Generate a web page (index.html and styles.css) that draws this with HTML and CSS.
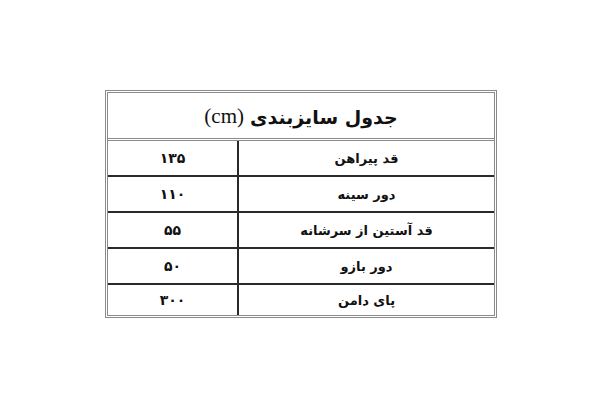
FILE: index.html
```html
<!DOCTYPE html>
<html lang="fa" dir="rtl">
<head>
<meta charset="utf-8">
<title>جدول سایزبندی</title>
<link rel="stylesheet" href="styles.css">
</head>
<body>
<div class="page">
  <div class="frame">
    <div class="title">جدول سایزبندی <span class="unit">(cm)</span></div>
    <div class="grid">
      <div class="label">قد پیراهن</div><div class="value">۱۳۵</div>
      <div class="label">دور سینه</div><div class="value">۱۱۰</div>
      <div class="label">قد آستین از سرشانه</div><div class="value">۵۵</div>
      <div class="label">دور بازو</div><div class="value">۵۰</div>
      <div class="label last">پای دامن</div><div class="value last">۳۰۰</div>
    </div>
  </div>
</div>
</body>
</html>
```

FILE: styles.css
```css
html, body {
  margin: 0;
  padding: 0;
  background: #ffffff;
}
body {
  font-family: "DejaVu Sans", "Noto Sans", sans-serif;
  color: #111;
}
.page {
  padding-top: 90px;
}
.frame {
  width: 386px;
  margin: 0 0 0 104px;
  margin-right: auto;
  border: 3px double #8a8a8a;
}
.page { direction: ltr; }
.frame { direction: rtl; margin-left: 105px; }
.title {
  height: 48px;
  display: flex;
  align-items: center;
  justify-content: center;
  font-weight: bold;
  font-size: 19px;
  border-bottom: 3px double #8a8a8a;
  padding-top: 2px;
  box-sizing: border-box;
}
.unit {
  font-family: "Liberation Serif", serif;
  font-weight: normal;
  font-size: 21px;
  margin-right: 6px;
}
.grid {
  display: grid;
  grid-template-columns: 255px 131px;
}
.label, .value {
  height: 36px;
  box-sizing: border-box;
  border-bottom: 2px solid #2a2a2a;
  display: flex;
  align-items: center;
  justify-content: center;
  font-weight: bold;
  font-size: 13px;
}
.value {
  border-right: 2px solid #2a2a2a;
  font-size: 14px;
}
.label.last, .value.last {
  height: 30px;
  border-bottom: none;
}
```
